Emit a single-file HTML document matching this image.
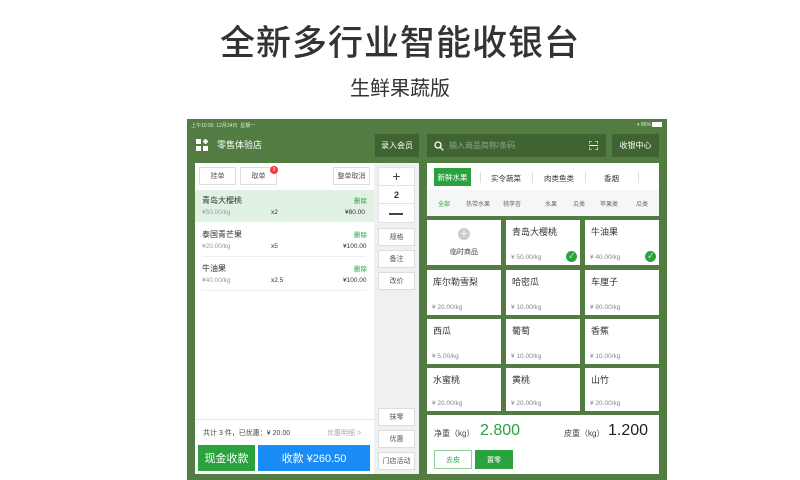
<!DOCTYPE html>
<html><head><meta charset="utf-8"><style>
*{margin:0;padding:0;box-sizing:border-box}
body{width:800px;height:480px;background:#fff;position:relative;overflow:hidden;font-family:"Liberation Sans","Noto Sans CJK SC",sans-serif;color:#333}
.a{position:absolute}
.t1{left:0;width:800px;top:24px;text-align:center;font-size:35px;letter-spacing:1px;color:#333;line-height:40px;font-weight:500}
.t2{left:0;width:800px;top:76px;text-align:center;font-size:20px;color:#333;line-height:26px}
.frame{left:187px;top:119px;width:480px;height:361px;background:#527c41}
.dk{background:#3f6432;color:#fff;font-size:8px;display:flex;align-items:center;justify-content:center}
.w{background:#fff}
.btn{background:#fff;border:1px solid #ddd;font-size:7px;color:#555;display:flex;align-items:center;justify-content:center}
.g{color:#2aa33e}
.card{background:#fff;width:74px}
.card .n{position:absolute;left:6px;top:5px;font-size:9px;color:#333}
.card .p{position:absolute;left:5px;bottom:4px;font-size:6.5px;color:#888}
.chk{position:absolute;right:3px;bottom:3px;width:11px;height:11px;border-radius:50%;background:#2aa33e;color:#fff;font-size:7px;line-height:11px;text-align:center}
.s{font-size:6.5px;color:#999}
.sc{position:absolute;top:199px;font-size:6px;color:#666}
</style></head><body>
<div class="a t1">全新多行业智能收银台</div>
<div class="a t2">生鲜果蔬版</div>
<div class="a frame"></div>
<div class="a" style="left:191px;top:122px;font-size:5px;color:#dfe8da">上午10:00&nbsp; 12月24日&nbsp; 星期一</div>
<div class="a" style="left:637px;top:122px;font-size:5px;color:#dfe8da">▾ 86% <span style="display:inline-block;width:10px;height:5px;background:#fff;vertical-align:middle"></span></div>
<svg class="a" style="left:196px;top:139px" width="13" height="12"><rect x="0" y="0" width="5" height="5" fill="#fff"/><rect x="0" y="7" width="5" height="5" fill="#fff"/><rect x="7" y="7" width="5" height="5" fill="#fff"/><path d="M9.5 0v5M7 2.5h5" stroke="#fff" stroke-width="2"/></svg>
<div class="a" style="left:217px;top:138px;font-size:9px;color:#fff">零售体验店</div>
<div class="a dk" style="left:375px;top:134px;width:44px;height:23px">录入会员</div>
<div class="a dk" style="left:427px;top:134px;width:179px;height:23px;justify-content:flex-start;padding-left:7px;color:#8fa886"><svg width="10" height="10" style="margin-right:5px"><circle cx="4" cy="4" r="3" stroke="#fff" stroke-width="1.3" fill="none"/><path d="M6.3 6.3l3 3" stroke="#fff" stroke-width="1.3"/></svg>输入商品简称/条码<svg width="9" height="9" style="position:absolute;right:8px;top:7px"><path d="M0 3V0h3M6 0h3v3M9 6v3H6M3 9H0V6M0 4.5h9" stroke="#fff" fill="none" stroke-width="1"/></svg></div>
<div class="a dk" style="left:612px;top:134px;width:47px;height:23px">收银中心</div>

<div class="a w" style="left:195px;top:163px;width:179px;height:311px"></div>
<div class="a" style="left:374px;top:163px;width:45px;height:311px;background:#eff0f2"></div>
<div class="a btn" style="left:199px;top:167px;width:37px;height:18px">挂单</div>
<div class="a btn" style="left:240px;top:167px;width:37px;height:18px">取单</div>
<div class="a" style="left:270px;top:166px;width:8px;height:8px;border-radius:50%;background:#f33;color:#fff;font-size:5px;line-height:8px;text-align:center">9</div>
<div class="a btn" style="left:333px;top:167px;width:37px;height:18px">整单取消</div>
<div class="a" style="left:195px;top:190px;width:179px;height:32px;background:#e1f1e3"></div>
<div class="a" style="left:202px;top:195px;font-size:8px">青岛大樱桃</div>
<div class="a g" style="left:354px;top:195px;font-size:6.5px">删除</div>
<div class="a s" style="left:202px;top:209px">¥50.00/kg</div><div class="a" style="left:271px;top:209px;font-size:6.5px">x2</div><div class="a" style="left:345px;top:209px;font-size:6.5px">¥80.00</div>
<div class="a" style="left:202px;top:229px;font-size:8px">泰国青芒果</div>
<div class="a g" style="left:354px;top:229px;font-size:6.5px">删除</div>
<div class="a s" style="left:202px;top:243px">¥20.00/kg</div><div class="a" style="left:271px;top:243px;font-size:6.5px">x5</div><div class="a" style="left:343px;top:243px;font-size:6.5px">¥100.00</div>
<div class="a" style="left:202px;top:256px;width:164px;border-top:1px solid #eee"></div>
<div class="a" style="left:202px;top:263px;font-size:8px">牛油果</div>
<div class="a g" style="left:354px;top:263px;font-size:6.5px">删除</div>
<div class="a s" style="left:202px;top:277px">¥40.00/kg</div><div class="a" style="left:271px;top:277px;font-size:6.5px">x2.5</div><div class="a" style="left:343px;top:277px;font-size:6.5px">¥100.00</div>
<div class="a" style="left:202px;top:290px;width:164px;border-top:1px solid #eee"></div>
<div class="a" style="left:195px;top:419px;width:179px;border-top:1px solid #e5e5e5"></div>
<div class="a" style="left:203px;top:428px;font-size:7px;color:#444">共计 3 件，已优惠：¥ 20.00</div>
<div class="a" style="left:327px;top:428px;font-size:7px;color:#aaa">优惠明细 &gt;</div>
<div class="a" style="left:198px;top:445px;width:57px;height:26px;background:#2aa33e;color:#fff;font-size:11px;display:flex;align-items:center;justify-content:center">现金收款</div>
<div class="a" style="left:258px;top:445px;width:112px;height:26px;background:#1a8cf5;color:#fff;font-size:11px;display:flex;align-items:center;justify-content:center">收款 ¥260.50</div>

<div class="a btn" style="left:378px;top:167px;width:37px;height:56px;flex-direction:column;border-color:#e3e3e3"></div>
<div class="a" style="left:378px;top:167px;width:37px;height:18px;text-align:center;font-size:14px;line-height:18px;color:#444">+</div>
<div class="a" style="left:378px;top:185px;width:37px;height:19px;text-align:center;font-size:9px;line-height:19px;border-top:1px solid #e3e3e3;border-bottom:1px solid #e3e3e3;font-weight:bold">2</div>
<div class="a" style="left:389px;top:213px;width:14px;height:1.5px;background:#444"></div>
<div class="a btn" style="left:378px;top:228px;width:37px;height:18px">规格</div>
<div class="a btn" style="left:378px;top:250px;width:37px;height:18px">备注</div>
<div class="a btn" style="left:378px;top:272px;width:37px;height:18px">改价</div>
<div class="a btn" style="left:378px;top:408px;width:37px;height:18px">抹零</div>
<div class="a btn" style="left:378px;top:430px;width:37px;height:18px">优惠</div>
<div class="a btn" style="left:378px;top:452px;width:37px;height:18px">门店活动</div>

<div class="a w" style="left:427px;top:163px;width:232px;height:53px"></div>
<div class="a" style="left:434px;top:168px;width:37px;height:18px;background:#2aa33e;color:#fff;font-size:7.5px;display:flex;align-items:center;justify-content:center">新鲜水果</div>
<div class="a" style="left:480px;top:172px;height:11px;border-left:1px solid #ddd"></div>
<div class="a" style="left:491px;top:173px;font-size:7.5px">实令蔬菜</div>
<div class="a" style="left:532px;top:172px;height:11px;border-left:1px solid #ddd"></div>
<div class="a" style="left:544px;top:173px;font-size:7.5px">肉类鱼类</div>
<div class="a" style="left:585px;top:172px;height:11px;border-left:1px solid #ddd"></div>
<div class="a" style="left:604px;top:173px;font-size:7.5px">香烟</div>
<div class="a" style="left:638px;top:172px;height:11px;border-left:1px solid #ddd"></div>
<div class="a" style="left:427px;top:190px;width:232px;height:26px;background:#f5f6f7"></div>
<div class="sc" style="left:438px;color:#2aa33e">全部</div>
<div class="sc" style="left:466px">热带水果</div>
<div class="sc" style="left:503px">桃李杏</div>
<div class="sc" style="left:545px">水果</div>
<div class="sc" style="left:573px">瓜类</div>
<div class="sc" style="left:600px">苹果类</div>
<div class="sc" style="left:636px">瓜类</div>

<div class="a card" style="left:427px;top:220px;height:45px"><div style="position:absolute;left:31px;top:8px;width:12px;height:12px;border-radius:50%;background:#ccc;color:#fff;font-size:11px;line-height:12px;text-align:center">+</div><div style="position:absolute;left:0;width:74px;top:27px;text-align:center;font-size:7px;color:#444">临时商品</div></div>
<div class="a card" style="left:506px;top:220px;height:45px"><div class="n">青岛大樱桃</div><div class="p">¥ 50.00/kg</div><div class="chk">✓</div></div>
<div class="a card" style="left:585px;top:220px;height:45px"><div class="n">牛油果</div><div class="p">¥ 40.00/kg</div><div class="chk">✓</div></div>
<div class="a card" style="left:427px;top:270px;height:45px"><div class="n">库尔勒雪梨</div><div class="p">¥ 20.00/kg</div></div>
<div class="a card" style="left:506px;top:270px;height:45px"><div class="n">哈密瓜</div><div class="p">¥ 10.00/kg</div></div>
<div class="a card" style="left:585px;top:270px;height:45px"><div class="n">车厘子</div><div class="p">¥ 80.00/kg</div></div>
<div class="a card" style="left:427px;top:319px;height:45px"><div class="n">西瓜</div><div class="p">¥ 5.00/kg</div></div>
<div class="a card" style="left:506px;top:319px;height:45px"><div class="n">葡萄</div><div class="p">¥ 10.00/kg</div></div>
<div class="a card" style="left:585px;top:319px;height:45px"><div class="n">香蕉</div><div class="p">¥ 10.00/kg</div></div>
<div class="a card" style="left:427px;top:368px;height:43px"><div class="n">水蜜桃</div><div class="p">¥ 20.00/kg</div></div>
<div class="a card" style="left:506px;top:368px;height:43px"><div class="n">黄桃</div><div class="p">¥ 20.00/kg</div></div>
<div class="a card" style="left:585px;top:368px;height:43px"><div class="n">山竹</div><div class="p">¥ 20.00/kg</div></div>

<div class="a w" style="left:427px;top:415px;width:232px;height:59px"></div>
<div class="a" style="left:434px;top:428px;font-size:8px;color:#444">净重（kg）</div>
<div class="a g" style="left:480px;top:422px;font-size:16px">2.800</div>
<div class="a" style="left:564px;top:428px;font-size:8px;color:#444">皮重（kg）</div>
<div class="a" style="left:608px;top:422px;font-size:16px;color:#222">1.200</div>
<div class="a g" style="left:434px;top:450px;width:38px;height:19px;border:1px solid #8fd09a;font-size:7px;display:flex;align-items:center;justify-content:center;background:#fff">去皮</div>
<div class="a" style="left:475px;top:450px;width:38px;height:19px;background:#2aa33e;color:#fff;font-size:7px;display:flex;align-items:center;justify-content:center">置零</div>
</body></html>
